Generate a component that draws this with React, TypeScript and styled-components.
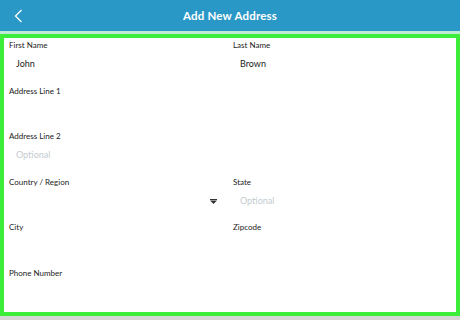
import styled, { createGlobalStyle } from 'styled-components';

const GlobalStyle = createGlobalStyle`
  html, body {
    margin: 0;
    padding: 0;
    background: #d6d6d6;
    font-family: Lato, "Open Sans", "Liberation Sans", sans-serif;
  }
`;

interface Field {
  label: string;
  value?: string;
  placeholder?: string;
  select?: boolean;
}

const rows: Field[][] = [
  [{ label: 'First Name', value: 'John' }, { label: 'Last Name', value: 'Brown' }],
  [{ label: 'Address Line 1' }],
  [{ label: 'Address Line 2', placeholder: 'Optional' }],
  [{ label: 'Country / Region', select: true }, { label: 'State', placeholder: 'Optional' }],
  [{ label: 'City' }, { label: 'Zipcode' }],
  [{ label: 'Phone Number' }],
];

const App = () => {
  return (
    <Page>
      <GlobalStyle />
      <Header>
        <Back>
          <svg width="9" height="14" viewBox="0 0 9 14">
            <path d="M7.5 1 L1.5 7 L7.5 13" fill="none" stroke="#fff" strokeWidth="1.3" />
          </svg>
        </Back>
        <Title>Add New Address</Title>
      </Header>
      <Strip />
      <Form>
        {rows.map((row, i) => (
          <Row key={i}>
            {row.map(field => (
              <FieldBox key={field.label}>
                <Label>{field.label}</Label>
                <Value $muted={!field.value}>
                  {field.value || field.placeholder || ''}
                  {field.select && (
                    <Caret>
                      <svg width="7" height="5" viewBox="0 0 7 5">
                        <rect x="0" y="0" width="7" height="1" fill="#333" />
                        <path d="M0 1.5 H7 L3.5 5 Z" fill="#333" />
                      </svg>
                    </Caret>
                  )}
                </Value>
              </FieldBox>
            ))}
          </Row>
        ))}
      </Form>
      <Footer />
    </Page>
  );
}

const Page = styled.div`
  width: 460px;
  height: 320px;
  display: flex;
  flex-direction: column;
  overflow: hidden;
`;

const Header = styled.div`
  height: 31px;
  flex-shrink: 0;
  background: #2a98c7;
  display: flex;
  align-items: center;
  justify-content: center;
  position: relative;
`;

const Back = styled.div`
  position: absolute;
  left: 14px;
  top: 9px;
  display: flex;
`;

const Title = styled.div`
  color: #fff;
  font-size: 11.5px;
  font-weight: 700;
  letter-spacing: 0.2px;
`;

const Strip = styled.div`
  height: 3px;
  flex-shrink: 0;
  background: #bfe8d6;
`;

const Form = styled.div`
  box-sizing: border-box;
  height: 282px;
  flex-shrink: 0;
  border: 4px solid #3ced3c;
  background: #fff;
  padding: 2px 5px 0;
  display: flex;
  flex-direction: column;
  overflow: hidden;
`;

const Row = styled.div`
  display: grid;
  grid-template-columns: 224px 1fr;
  height: 45.5px;
  flex-shrink: 0;
`;

const FieldBox = styled.div`
  display: flex;
  flex-direction: column;
  position: relative;
`;

const Label = styled.div`
  font-size: 8px;
  line-height: 10px;
  color: #222;
`;

const Value = styled.div<{ $muted: boolean }>`
  margin-top: 5px;
  height: 18px;
  line-height: 18px;
  font-size: 9px;
  padding-left: 7px;
  color: ${p => (p.$muted ? '#c3ccd0' : '#222')};
`;

const Caret = styled.span`
  position: absolute;
  left: 201px;
  top: 22px;
  display: flex;
`;

const Footer = styled.div`
  flex: 1;
  background: #d6d6d6;
`;

export default App
